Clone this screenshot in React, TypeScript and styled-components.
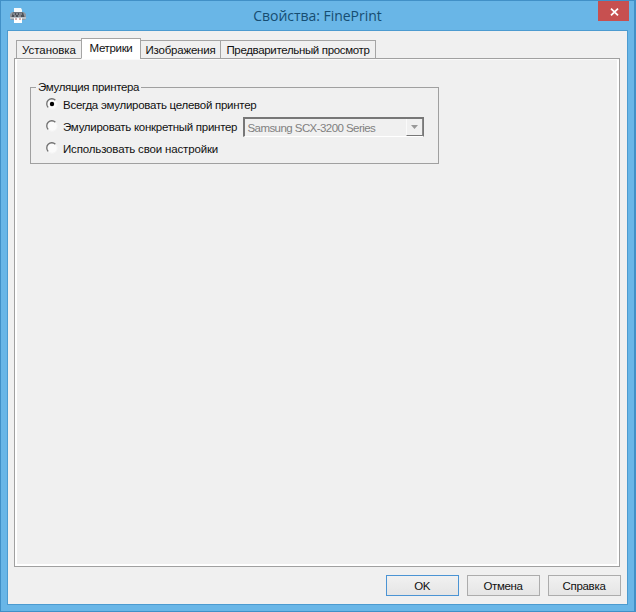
import React from "react";
import styled, { createGlobalStyle } from "styled-components";

const GlobalStyle = createGlobalStyle`
  * { box-sizing: border-box; }
  body { margin: 0; overflow: hidden; }
`;

const Window = styled.div`
  width: 636px;
  height: 612px;
  display: flex;
  flex-direction: column;
  background: #69b6e7;
  border: 1px solid #4190c7;
  border-right-width: 2px;
  padding: 0 6px 6px;
  font: 11.5px/14px "Liberation Sans", Arial, sans-serif;
  color: #111;
`;

const TitleBar = styled.header`
  flex: 0 0 29px;
  display: grid;
  grid-template-columns: 31px 1fr 31px;
  align-items: start;
`;

const AppIcon = styled.svg`
  width: 18px;
  height: 18px;
  margin: 6px 0 0 2px;
`;

const Title = styled.h1<{ $spacing: number }>`
  margin: 0;
  padding-top: 5px;
  text-align: center;
  font: 400 14px/20px "Open Sans", "Noto Sans", sans-serif;
  letter-spacing: ${(p) => p.$spacing}px;
  color: #164d72;
`;

const CloseButton = styled.button`
  width: 31px;
  height: 20px;
  display: grid;
  place-items: center;
  margin-left: 1px;
  padding: 2px 0 0 1px;
  border: 0;
  background: #c75050;
`;

const Client = styled.main`
  flex: 1;
  display: flex;
  flex-direction: column;
  padding: 7px 7px 7px 6px;
  background: #f0f0f0;
  border: 1px solid #4c9bd0;
`;

const TabList = styled.nav`
  display: flex;
  align-items: flex-end;
  height: 21px;
  margin-bottom: -1px;
  padding-left: 2px;
  z-index: 1;
`;

const Tab = styled.button<{ $width: number; $spacing: number; $active?: boolean }>`
  width: ${(p) => p.$width}px;
  height: ${(p) => (p.$active ? 21 : 19)}px;
  padding: ${(p) => (p.$active ? "0 0 2px" : "1px 0 0")};
  border: 1px solid #a5a5a5;
  border-bottom-color: ${(p) => (p.$active ? "#fff" : "#a0a0a0")};
  margin-right: -1px;
  background: ${(p) => (p.$active ? "#fff" : "#f0f0f0")};
  font: inherit;
  letter-spacing: ${(p) => p.$spacing}px;
  color: #111;
  white-space: nowrap;
`;

const Pane = styled.section`
  flex: 0 0 509px;
  padding: 21px 15px;
  border: 1px solid #a0a0a0;
  box-shadow: inset 2px 0 #fff, inset 0 1px #fafafa, inset -2px -2px #fff;
`;

const Group = styled.fieldset`
  width: 409px;
  height: 84px;
  margin: 0;
  padding: 0 14px 0 15px;
  border: 1px solid #a0a0a0;
  min-width: 0;
`;

const Legend = styled.legend<{ $spacing: number }>`
  margin-left: -10px;
  padding: 0 2px;
  letter-spacing: ${(p) => p.$spacing}px;
`;

const Options = styled.div`
  display: flex;
  flex-direction: column;
  margin-top: -1px;
`;

const Row = styled.div`
  height: 22px;
  display: flex;
  align-items: center;
`;

const Option = styled.label<{ $spacing: number; $width: number }>`
  width: ${(p) => p.$width}px;
  display: flex;
  align-items: center;
  gap: 5px;
  white-space: nowrap;
  letter-spacing: ${(p) => p.$spacing}px;
`;

const OptionText = styled.span`
  padding-top: 1px;
`;

const RadioMark = styled.svg`
  width: 12px;
  height: 12px;
  flex: none;
`;

const Combo = styled.div`
  width: 181px;
  height: 20px;
  display: flex;
  align-items: center;
  justify-content: space-between;
  margin-top: 2px;
  padding-left: 2px;
  border: 2px solid #777;
  border-right: 1px solid #777;
  border-bottom: 1px solid #fff;
  color: #808080;
`;

const ComboText = styled.span<{ $spacing: number }>`
  letter-spacing: ${(p) => p.$spacing}px;
  white-space: nowrap;
`;

const ComboArrow = styled.span`
  width: 17px;
  height: 17px;
  display: grid;
  place-items: center;
  background: #f0f0f0;
  border-right: 1px solid #8a8a8a;
  border-bottom: 1px solid #777;
  border-left: 1px solid #fafafa;
`;

const Actions = styled.footer`
  display: flex;
  justify-content: flex-end;
  gap: 8px;
  margin-top: 8px;
  margin-right: -1px;
`;

const Button = styled.button<{ $spacing: number; $primary?: boolean }>`
  width: 73px;
  height: 21px;
  padding: 1px 1px 0 0;
  border: 1px solid ${(p) => (p.$primary ? "#4b94d4" : "#acacac")};
  background: linear-gradient(#f1f1f1, #e5e5e5);
  font: inherit;
  letter-spacing: ${(p) => p.$spacing}px;
  color: #111;
`;

function Radio({ checked }: { checked?: boolean }) {
  return (
    <RadioMark viewBox="0 0 12 12">
      <circle cx="6" cy="6" r="5" fill="#fbfbfb" />
      <path d="M2.3 9.5A5 5 0 0 1 9.4 2.2" fill="none" stroke="#707070" strokeWidth="1.3" />
      <path d="M2.5 9.8A5 5 0 0 0 9.8 2.5" fill="none" stroke="#f6f6f6" />
      {checked && <circle cx="6" cy="6" r="2.2" fill="#000" />}
    </RadioMark>
  );
}

export default function App() {
  return (
    <>
      <GlobalStyle />
      <Window>
        <TitleBar>
          <AppIcon viewBox="0 0 18 18">
            <path d="M5 1h7l1 2v4H5z" fill="#f5fafc" />
            <path d="M3 5h12l2 2v5l-2 1H3l-2-1V7z" fill="#9099a3" />
            <path d="M4 5.5h10l1.5 4.5h-13z" fill="#4a4f57" />
            <path d="M4 7h2m1 0h2m1 0h3M5 9h2m2 0h3" stroke="#b9bec4" />
            <path d="M2 10v2M16 10v2M3 11h12" stroke="#dfe6ea" />
            <path d="M5 11h8v5H5z" fill="#fff" />
            <path d="M6 12h2m2 0h2" stroke="#a86666" />
          </AppIcon>
          <Title $spacing={-0.04}>Свойства: FinePrint</Title>
          <CloseButton aria-label="Закрыть">
            <svg width="9" height="8" viewBox="0 0 9 8">
              <path d="M1 .7 8 7.3M8 .7 1 7.3" stroke="#fff" strokeWidth="1.8" />
            </svg>
          </CloseButton>
        </TitleBar>
        <Client>
          <TabList>
            <Tab $width={66} $spacing={-0.05}>Установка</Tab>
            <Tab $width={60} $spacing={-0.35} $active>Метрики</Tab>
            <Tab $width={81} $spacing={-0.2}>Изображения</Tab>
            <Tab $width={156} $spacing={-0.34}>Предварительный просмотр</Tab>
          </TabList>
          <Pane>
            <Group>
              <Legend $spacing={-0.33}>Эмуляция принтера</Legend>
              <Options>
                <Row>
                  <Option $spacing={-0.27} $width={300}>
                    <Radio checked />
                    <OptionText>Всегда эмулировать целевой принтер</OptionText>
                  </Option>
                </Row>
                <Row>
                  <Option $spacing={-0.27} $width={198}>
                    <Radio />
                    <OptionText>Эмулировать конкретный принтер</OptionText>
                  </Option>
                  <Combo>
                    <ComboText $spacing={-0.56}>Samsung SCX-3200 Series</ComboText>
                    <ComboArrow>
                      <svg width="7" height="4" viewBox="0 0 7 4">
                        <path d="M0 0h7L3.5 4z" fill="#999" />
                      </svg>
                    </ComboArrow>
                  </Combo>
                </Row>
                <Row>
                  <Option $spacing={-0.16} $width={300}>
                    <Radio />
                    <OptionText>Использовать свои настройки</OptionText>
                  </Option>
                </Row>
              </Options>
            </Group>
          </Pane>
          <Actions>
            <Button $spacing={-0.5} $primary>OK</Button>
            <Button $spacing={-0.35}>Отмена</Button>
            <Button $spacing={-0.3}>Справка</Button>
          </Actions>
        </Client>
      </Window>
    </>
  );
}
